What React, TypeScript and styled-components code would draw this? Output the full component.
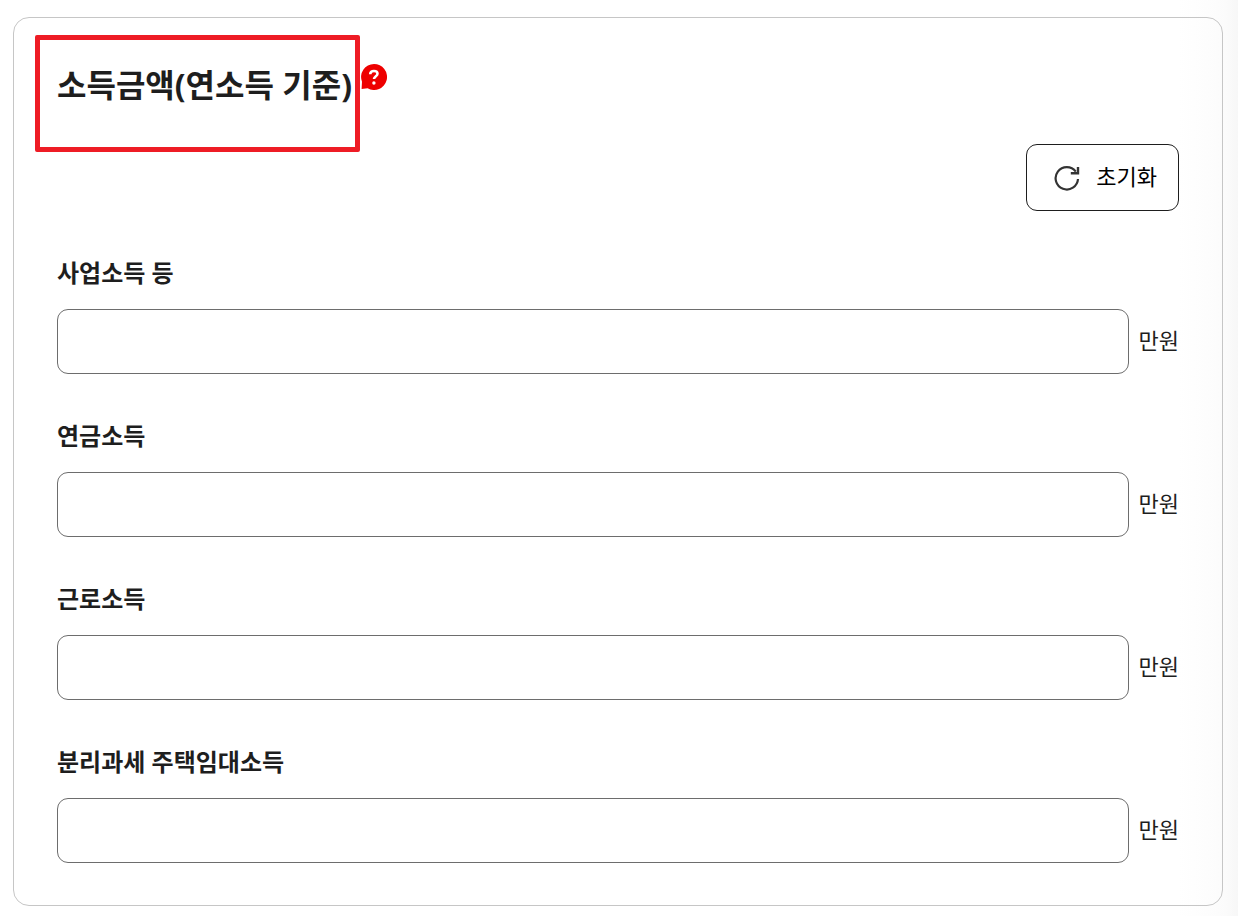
import React, { useState } from "react";
import styled, { createGlobalStyle } from "styled-components";

const GlobalStyle = createGlobalStyle`
  *, *::before, *::after { box-sizing: border-box; }
  body {
    margin: 0;
    background: #ffffff;
    color: #1e1e1e;
    font-family: "Noto Sans", "Noto Sans CJK KR", sans-serif;
  }
`;

const Page = styled.main`
  padding: 17px 15px 10px 13px;
  background: linear-gradient(to left, #f7f7f7, #fbfbfb 12px, #fdfdfd 30px, #ffffff 60px);
`;

const Card = styled.section`
  display: flex;
  flex-direction: column;
  padding: 44px 43px 42px;
  border: 1px solid #c6c6c6;
  border-radius: 16px;
`;

const Header = styled.header`
  display: flex;
  align-items: flex-start;
  gap: 9px;
`;

const TitleWrap = styled.div`
  position: relative;
`;

const Title = styled.h2`
  margin: 0;
  font-size: 32px;
  line-height: 46px;
  font-weight: 700;
  white-space: nowrap;
`;

const Highlight = styled.span`
  position: absolute;
  inset: -27px -8px -44px -22px;
  border: 5px solid #ee1c25;
  border-radius: 2px;
  pointer-events: none;
`;

const HelpButton = styled.button`
  display: flex;
  margin-top: 2px;
  padding: 0;
  border: 0;
  background: none;
  cursor: pointer;
`;

const ResetButton = styled.button`
  display: flex;
  align-items: center;
  justify-content: center;
  align-self: flex-end;
  gap: 16px;
  height: 67px;
  margin: 36px 0 45px;
  padding: 0 21px 0 27px;
  border: 1px solid #1e1e1e;
  border-radius: 11px;
  background: #ffffff;
  color: #000000;
  font-family: inherit;
  cursor: pointer;
`;

const BodyText = styled.span`
  padding-bottom: 4px;
  font-size: 22px;
  line-height: 32px;
`;

const Fields = styled.form`
  display: grid;
  gap: 45px;
`;

const Field = styled.div`
  display: flex;
  flex-direction: column;
  gap: 19px;
`;

const Label = styled.label`
  font-size: 24px;
  line-height: 34px;
  font-weight: 700;
`;

const InputRow = styled.div`
  display: flex;
  align-items: center;
  gap: 10px;
`;

const AmountInput = styled.input`
  flex: 1;
  min-width: 0;
  height: 65px;
  padding: 0 20px;
  border: 1px solid #6d6d6d;
  border-radius: 11px;
  background: #ffffff;
  color: inherit;
  font-family: inherit;
  font-size: 22px;
`;

const HelpIcon = () => (
  <svg width="26" height="26" viewBox="0 0 26 26" aria-hidden="true">
    <path d="M13 0a13 13 0 1 1-6.4 24.3L0.6 25 1 17.8A13 13 0 0 1 13 0Z" fill="#ee0000" />
    <path
      d="M9.2 10.2c0-2.2 1.5-3.2 3.7-3.2 2.1 0 3.6 1 3.6 2.7 0 2.4-3.5 2.6-3.5 5.4"
      fill="none"
      stroke="#ffffff"
      strokeWidth="2.6"
    />
    <circle cx="12.9" cy="19" r="1.7" fill="#ffffff" />
  </svg>
);

const ResetIcon = () => (
  <svg width="26" height="26" viewBox="0 0 26 26" fill="none" stroke="#333333" strokeWidth="2.2" aria-hidden="true">
    <path d="M24 14A11.2 11.2 0 1 1 21.8 6.6" />
    <path d="M24 2V8.3H16.8" strokeWidth="2.4" />
  </svg>
);

const incomes = [
  { id: "business", label: "사업소득 등" },
  { id: "pension", label: "연금소득" },
  { id: "earned", label: "근로소득" },
  { id: "rental", label: "분리과세 주택임대소득" },
];

export default function App() {
  const [values, setValues] = useState<Record<string, string>>({});

  return (
    <>
      <GlobalStyle />
      <Page>
        <Card aria-labelledby="income-title">
          <Header>
            <TitleWrap>
              <Title id="income-title">소득금액(연소득 기준)</Title>
              <Highlight />
            </TitleWrap>
            <HelpButton type="button" aria-label="도움말">
              <HelpIcon />
            </HelpButton>
          </Header>
          <ResetButton type="button" onClick={() => setValues({})}>
            <ResetIcon />
            <BodyText>초기화</BodyText>
          </ResetButton>
          <Fields onSubmit={(e) => e.preventDefault()}>
            {incomes.map(({ id, label }) => (
              <Field key={id}>
                <Label htmlFor={id}>{label}</Label>
                <InputRow>
                  <AmountInput
                    id={id}
                    type="text"
                    inputMode="numeric"
                    value={values[id] ?? ""}
                    onChange={(e) => setValues({ ...values, [id]: e.target.value })}
                  />
                  <BodyText>만원</BodyText>
                </InputRow>
              </Field>
            ))}
          </Fields>
        </Card>
      </Page>
    </>
  );
}
